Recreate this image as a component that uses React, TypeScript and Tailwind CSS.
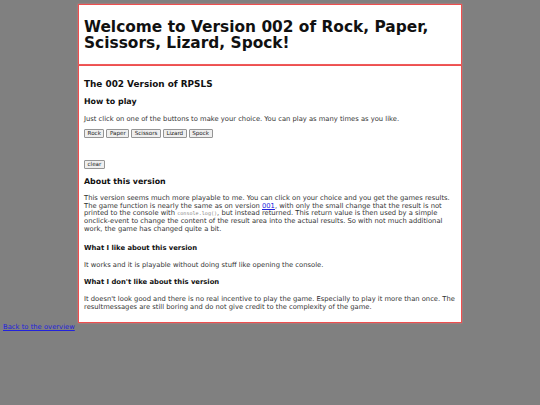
import React from "react";

const btn =
  "px-[2.5px] h-[9px] leading-[7px] text-[5.6px] bg-[#efefef] border border-[#959595] rounded-[1px] text-[#222] font-['DejaVu_Sans',sans-serif]";

const box =
  "mx-auto w-[384px] border border-[#ee4f4f] shadow-[0_0_1.5px_#f07a7a] bg-white px-[5px]";

export default function App() {
  return (
    <div className="min-h-[405px] w-[540px] bg-[#808080] pt-[4px] font-['DejaVu_Sans',sans-serif] text-[#333]">
      <div className={box + " pt-[14px] pb-[13px]"}>
        <h1 className="text-[15.4px] font-bold leading-[16px] text-[#111]">
          Welcome to Version 002 of Rock, Paper, Scissors, Lizard, Spock!
        </h1>
      </div>
      <div className={box + " pt-[12.5px] pb-[11px]"}>
        <h2 className="text-[8.9px] font-bold leading-[11px] text-[#111]">The 002 Version of RPSLS</h2>
        <h3 className="mt-[7px] text-[7.9px] font-bold leading-[10px] text-[#111]">How to play</h3>
        <p className="mt-[8.5px] text-[6.77px] leading-[8px]">
          Just click on one of the buttons to make your choice. You can play as many times as you like.
        </p>
        <div className="mt-[5.5px] flex gap-[2px]">
          <button className={btn}>Rock</button>
          <button className={btn}>Paper</button>
          <button className={btn}>Scissors</button>
          <button className={btn}>Lizard</button>
          <button className={btn}>Spock</button>
        </div>
        <div className="mt-[22px] flex">
          <button className={btn}>clear</button>
        </div>
        <h3 className="mt-[8.5px] text-[7.9px] font-bold leading-[10px] text-[#111]">About this version</h3>
        <p className="mt-[8px] text-[6.77px] leading-[7.7px]">
          This version seems much more playable to me. You can click on your choice and you get the games results. The game function is nearly the same as on version{" "}
          <a href="#" className="text-[#2222dd] underline">001</a>, with only the small change that the result is not printed to the console with{" "}
          <code className="font-['DejaVu_Sans_Mono',monospace] text-[5.1px] leading-[6px] text-[#888]">console.log()</code>, but instead returned. This return value is then used by a simple onclick-event to change the content of the result area into the actual results. So with not much additional work, the game has changed quite a bit.
        </p>
        <h4 className="mt-[10px] text-[6.8px] font-bold leading-[9px] text-[#111]">What I like about this version</h4>
        <p className="mt-[8.5px] text-[6.77px] leading-[8px]">
          It works and it is playable without doing stuff like opening the console.
        </p>
        <h4 className="mt-[8.5px] text-[6.8px] font-bold leading-[9px] text-[#111]">What I don't like about this version</h4>
        <p className="mt-[8.5px] text-[6.77px] leading-[8px]">
          It doesn't look good and there is no real incentive to play the game. Especially to play it more than once. The resultmessages are still boring and do not give credit to the complexity of the game.
        </p>
      </div>
      <a href="#" className="ml-[3px] block w-fit text-[6.8px] leading-[8px] text-[#2222dd] underline">
        Back to the overview
      </a>
    </div>
  );
}
